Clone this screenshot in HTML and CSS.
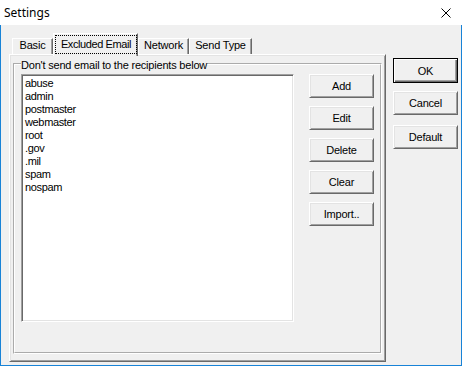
FILE: index.html
```html
<!DOCTYPE html>
<html>
<head>
    <title>Settings</title>
    <link rel="stylesheet" href="styles.css">
</head>
<body>
    <div class="window">
        <div class="titlebar">
            <span class="title">Settings</span>
            <svg class="close" width="10" height="10" viewBox="0 0 10 10">
                <path d="M0.5 0.5L9.5 9.5M9.5 0.5L0.5 9.5" stroke="#000" stroke-width="1" fill="none"/>
            </svg>
        </div>
        <div class="client">
            <div class="tabs">
                <div class="tabstrip">
                    <div class="tab tab-basic">Basic</div>
                    <div class="tab tab-selected"><span class="focus">Excluded Email</span></div>
                    <div class="tab tab-network">Network</div>
                    <div class="tab tab-sendtype">Send Type</div>
                </div>
                <div class="panel">
                    <fieldset class="group">
                        <legend>Don't send email to the recipients below</legend>
                        <div class="group-body">
                            <div class="list">
                                <div class="item">abuse</div>
                                <div class="item">admin</div>
                                <div class="item">postmaster</div>
                                <div class="item">webmaster</div>
                                <div class="item">root</div>
                                <div class="item">.gov</div>
                                <div class="item">.mil</div>
                                <div class="item">spam</div>
                                <div class="item">nospam</div>
                            </div>
                            <div class="side-buttons">
                                <button>Add</button>
                                <button>Edit</button>
                                <button>Delete</button>
                                <button>Clear</button>
                                <button>Import..</button>
                            </div>
                        </div>
                    </fieldset>
                </div>
            </div>
            <div class="dialog-buttons">
                <button class="btn-default">OK</button>
                <button class="btn-cancel">Cancel</button>
                <button>Default</button>
            </div>
        </div>
    </div>
</body>
</html>
```

FILE: styles.css
```css
* {
    box-sizing: border-box;
}
body {
    margin: 0;
    font-family: "Liberation Sans", Arial, sans-serif;
    font-size: 11px;
    letter-spacing: -0.2px;
    color: #000;
}
.window {
    width: 462px;
    height: 366px;
    display: flex;
    flex-direction: column;
    background: #fff;
}
.titlebar {
    height: 25px;
    display: flex;
    align-items: center;
    justify-content: space-between;
    background: #fff;
}
.title {
    margin-left: 4px;
    font-family: "Noto Sans", sans-serif;
    font-size: 12px;
    letter-spacing: 0;
}
.close {
    margin-right: 11px;
}
.client {
    flex: 1;
    display: flex;
    background: #f0f0f0;
    border: 1px solid #1883d7;
    border-top: 0;
    padding-bottom: 3px;
}
.tabs {
    width: 377px;
    margin-left: 8px;
    display: flex;
    flex-direction: column;
}
.tabstrip {
    height: 29px;
    display: flex;
    align-items: flex-end;
    padding-left: 3px;
}
.tab {
    height: 16px;
    border: 1px solid;
    border-color: #fff #696969 #fff #fff;
    border-bottom: 0;
    box-shadow: inset -1px 0 #a0a0a0;
    line-height: 13px;
    text-align: center;
    background: #f0f0f0;
}
.tab-basic {
    width: 41px;
}
.tab-network {
    width: 51px;
}
.tab-sendtype {
    width: 63px;
}
.tab-selected {
    width: 85px;
    height: 23px;
    margin-bottom: -2px;
    padding: 1px 0 0 1px;
    position: relative;
    z-index: 1;
}
.focus {
    display: block;
    width: 82px;
    height: 19px;
    border: 1px dotted #000;
    line-height: 16px;
    letter-spacing: -0.4px;
}
.panel {
    height: 308px;
    display: flex;
    flex-direction: column;
    border: 1px solid;
    border-color: #fff #696969 #696969 #fff;
    box-shadow: inset 1px 1px #e3e3e3, inset -1px -1px #a0a0a0;
    padding: 1px 3px 7px 3px;
}
.group {
    flex: 1;
    margin: 0;
    min-width: 0;
    border: 2px groove #fff;
    padding: 2px 6px 0 6px;
}
.group legend {
    padding: 3px 0 0 0;
    line-height: 13px;
}
.group-body {
    display: flex;
    align-items: flex-start;
    gap: 15px;
}
.list {
    width: 273px;
    height: 248px;
    background: #fff;
    border: 1px solid;
    border-color: #a0a0a0 #fff #fff #a0a0a0;
    box-shadow: inset 1px 1px #696969, inset -1px -1px #e3e3e3;
    padding: 2px 3px;
}
.item {
    line-height: 13px;
    letter-spacing: -0.35px;
}
.side-buttons {
    display: flex;
    flex-direction: column;
    gap: 8px;
}
button {
    width: 65px;
    height: 24px;
    padding: 0;
    font: inherit;
    letter-spacing: inherit;
    color: #000;
    background: #f0f0f0;
    border: 1px solid;
    border-color: #fff #696969 #696969 #fff;
    box-shadow: inset 1px 1px #e3e3e3, inset -1px -1px #a0a0a0;
}
.dialog-buttons {
    margin-left: 7px;
    padding-top: 33px;
    display: flex;
    flex-direction: column;
}
.btn-default {
    height: 25px;
    margin-bottom: 8px;
    border: 1px solid #000;
    box-shadow: inset 1px 1px #fff, inset -1px -1px #696969, inset -2px -2px #a0a0a0;
}
.btn-cancel {
    margin-bottom: 10px;
}
```
